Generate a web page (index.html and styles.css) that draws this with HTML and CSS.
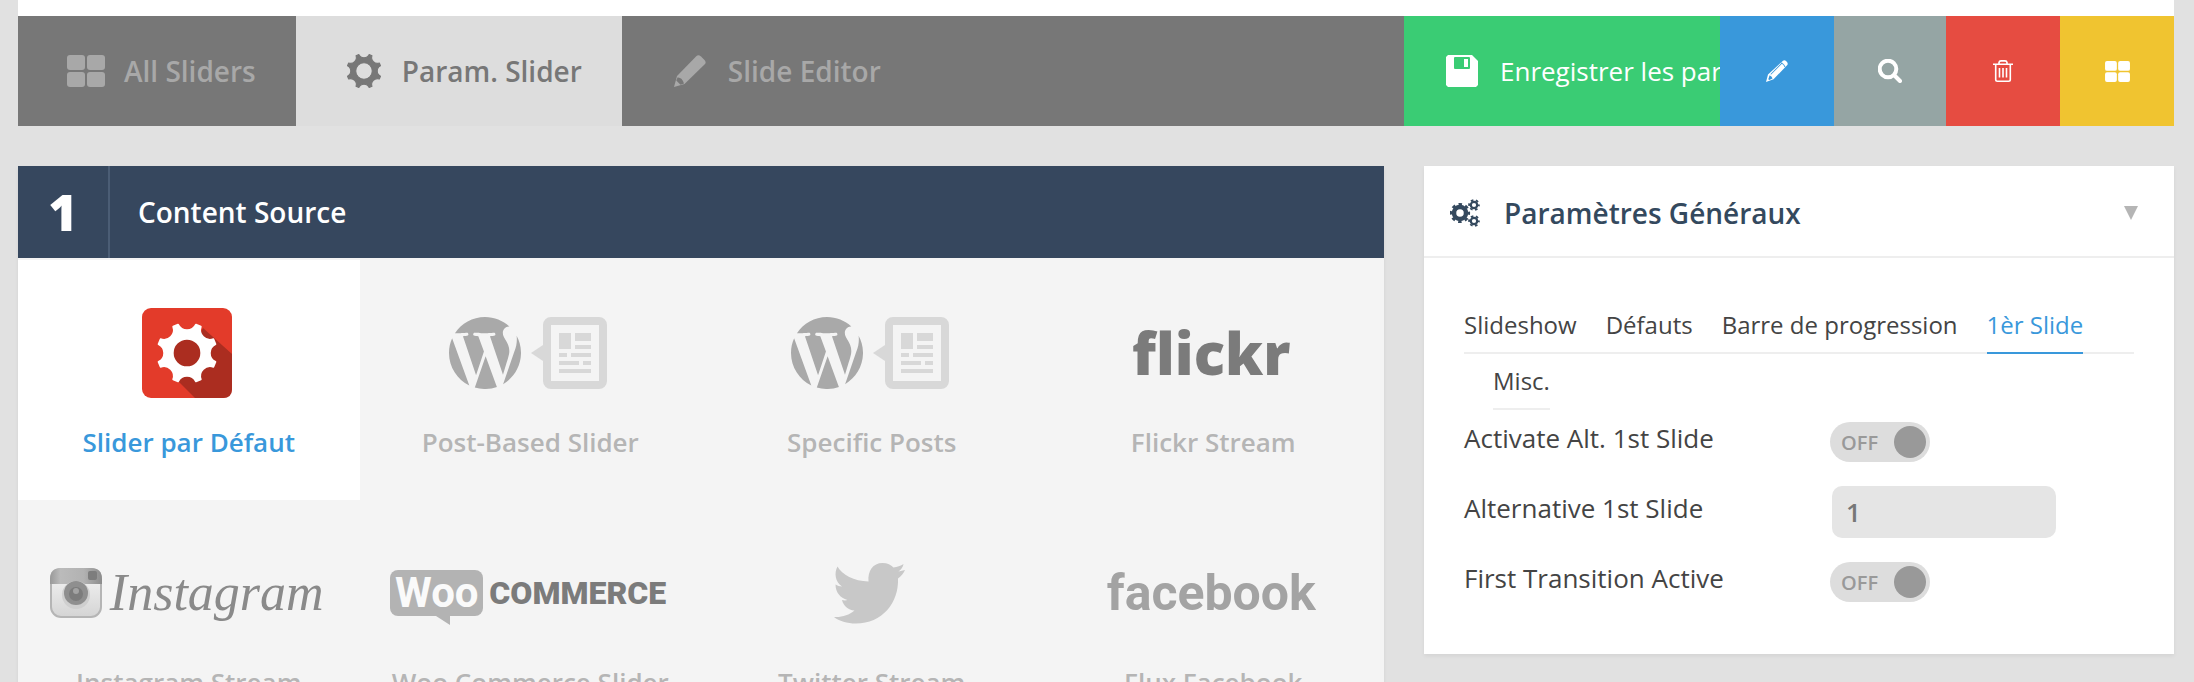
FILE: index.html
```html
<!DOCTYPE html>
<html lang="fr">
<head>
  <meta charset="UTF-8" />
  <meta name="viewport" content="width=device-width, initial-scale=1" />
  <title>Param. Slider</title>
  <link rel="stylesheet" href="styles.css">
</head>
<body>

  <!-- Shared icon shapes -->
  <svg class="sprite" aria-hidden="true">
    <symbol id="gear" viewBox="-50 -50 100 100">
      <path fill-rule="evenodd" stroke="currentColor" stroke-width="3" stroke-linejoin="round" d="M45.8 14.4L42.6 22.2A16 16 0 0 0 22.2 42.6L14.4 45.8A16 16 0 0 0-14.4 45.8L-22.2 42.6A16 16 0 0 0-42.6 22.2L-45.8 14.4A16 16 0 0 0-45.8-14.4L-42.6-22.2A16 16 0 0 0-22.2-42.6L-14.4-45.8A16 16 0 0 0 14.4-45.8L22.2-42.6A16 16 0 0 0 42.6-22.2L45.8-14.4A16 16 0 0 0 45.8 14.4ZM23 0A23 23 0 1 0-23 0A23 23 0 1 0 23 0Z"/>
    </symbol>
    <symbol id="blocks" viewBox="0 0 38 32">
      <rect width="18" height="15" rx="3"/>
      <rect x="20" width="18" height="15" rx="3"/>
      <rect y="17" width="18" height="15" rx="3"/>
      <rect x="20" y="17" width="18" height="15" rx="3"/>
    </symbol>
    <symbol id="wp-post" viewBox="0 0 158 72">
      <svg width="72" height="72" viewBox="8.7 8.7 105.1 105.1" fill="#a9a9a9">
        <path d="m8.708 61.26c0 20.802 12.089 38.779 29.619 47.298l-25.069-68.686c-2.916 6.536-4.55 13.769-4.55 21.388z"/>
        <path d="m96.74 58.608c0-6.495-2.333-10.993-4.334-14.494-2.664-4.329-5.161-7.995-5.161-12.324 0-4.831 3.664-9.328 8.825-9.328.233 0 .454.029.681.042-9.35-8.566-21.807-13.796-35.489-13.796-18.36 0-34.513 9.42-43.91 23.688 1.233.037 2.395.063 3.382.063 5.497 0 14.006-.667 14.006-.667 2.833-.167 3.167 3.994.337 4.329 0 0-2.847.335-6.015.501l19.138 56.925 11.501-34.493-8.188-22.434c-2.83-.166-5.511-.501-5.511-.501-2.832-.166-2.5-4.496.332-4.329 0 0 8.679.667 13.843.667 5.496 0 14.006-.667 14.006-.667 2.835-.167 3.168 3.994.337 4.329 0 0-2.853.335-6.015.501l18.992 56.494 5.242-17.517c2.272-7.269 4.001-12.49 4.001-16.989z"/>
        <path d="m62.184 65.857-15.768 45.819c4.708 1.384 9.687 2.141 14.846 2.141 6.12 0 11.989-1.058 17.452-2.979-.141-.225-.269-.464-.374-.724z"/>
        <path d="m107.376 36.046c.226 1.674.354 3.471.354 5.404 0 5.333-.996 11.328-3.996 18.824l-16.053 46.413c15.624-9.111 26.133-26.038 26.133-45.426.001-9.137-2.333-17.729-6.438-25.215z"/>
      </svg>
      <g fill="#d8d8d8">
        <path d="M82 36l12-8v16z"/>
        <path fill-rule="evenodd" d="M102 0h48a8 8 0 0 1 8 8v56a8 8 0 0 1-8 8h-48a8 8 0 0 1-8-8V8a8 8 0 0 1 8-8zM102 8v56h48V8z"/>
        <path d="M110 16h12v16h-12zM126 16h16v8h-16zM126 28h16v4h-16zM110 36h8v4h-8zM122 36h20v4h-20zM110 44h20v4h-20zM134 44h8v4h-8zM110 52h32v4h-32z"/>
      </g>
    </symbol>
  </svg>

  <div class="wrapper">

    <nav class="toolbar">
      <a href="#sliders" class="tab">
        <svg class="tab-icon" width="40" height="32"><use href="#blocks"/></svg>
        All Sliders
      </a>
      <a href="#params" class="tab active">
        <svg class="tab-icon" width="40" height="36"><use href="#gear"/></svg>
        Param. Slider
      </a>
      <a href="#editor" class="tab">
        <svg class="tab-icon" width="40" height="32" viewBox="0 0 40 32">
          <path d="M26.500 1Q28.500-.5 31 1.500L34.500 5Q36.500 7.500 35 9L14.500 29L4 32L7 21Z"/>
          <path class="notch" d="M7.500 22.500Q12 22 14 28.500L10.500 29.800L6.300 25.500Z"/>
        </svg>
        Slide Editor
      </a>

      <div class="actions">
        <button class="action save">
          <svg width="32" height="32" viewBox="0 0 32 32">
            <path fill="#fff" d="M2 0H26L32 6V30L30 32H2L0 30V2Z"/>
            <path fill="#3acc74" fill-rule="evenodd" d="M9 2H23Q24 2 24 3V13Q24 14 23 14H9Q8 14 8 13V3Q8 2 9 2ZM18 4V12H22V4Z"/>
          </svg>
          Enregistrer les paramètres
        </button>
        <button class="action edit" aria-label="Modifier">
          <svg width="22" height="22" viewBox="0 0 22 22">
            <path fill="#fff" fill-rule="evenodd" d="M17 .8Q18.500-.4 20.300 1.200Q22.500 3.200 21.300 5L7.500 19.300L0 22L2 14.500ZM3.600 15.300L2.300 19.200L3.300 19.900L6.500 18.600Q6.300 16.400 3.600 15.300ZM5.200 14.600L16.600 3L15.900 2.600L4.300 14.300Z"/>
            <path stroke="#3998db" stroke-width="1" fill="none" d="M15 3Q18 3.500 19 7"/>
          </svg>
        </button>
        <button class="action preview" aria-label="Aperçu">
          <svg width="24" height="24" viewBox="0 0 24 24" fill="none" stroke="#fff" stroke-width="4">
            <circle cx="10" cy="10" r="8.300"/>
            <path d="M16.500 16.500L22 22" stroke-linecap="round"/>
          </svg>
        </button>
        <button class="action delete" aria-label="Supprimer">
          <svg width="20" height="22" viewBox="0 0 20 22" fill="none" stroke="#fff" stroke-width="1.600">
            <path d="M0 4.300H20M6 4V2.500Q6.300.9 8 .9H12Q13.700.9 14 2.500V4M2.700 4.500V19.500Q2.700 21.200 4.400 21.200H15.600Q17.300 21.200 17.300 19.500V4.500M6.500 8V17.500M10 8V17.500M13.500 8V17.500"/>
          </svg>
        </button>
        <button class="action all" aria-label="Tous les sliders">
          <svg width="25" height="21" fill="#fff"><use href="#blocks"/></svg>
        </button>
      </div>
    </nav>

    <div class="columns">

      <section class="source">
        <header class="source-header">
          <span class="step">1</span>
          <h2>Content Source</h2>
        </header>

        <div class="source-grid">
          <label class="tile selected">
            <input type="radio" name="source" checked>
            <span class="logo">
              <svg width="90" height="90" viewBox="0 0 90 90">
                <rect width="90" height="90" rx="9" fill="#e33b2a"/>
                <path fill="#ab2d20" d="M61 20L90 46V81Q90 90 81 90H53L36 73Z"/>
                <circle cx="45" cy="45" r="16" fill="#ab2d20"/>
                <svg x="14" y="14" width="62" height="62" class="white"><use href="#gear"/></svg>
              </svg>
            </span>
            Slider par Défaut
          </label>

          <label class="tile">
            <input type="radio" name="source">
            <span class="logo"><svg width="158" height="72"><use href="#wp-post"/></svg></span>
            Post-Based Slider
          </label>

          <label class="tile">
            <input type="radio" name="source">
            <span class="logo"><svg width="158" height="72"><use href="#wp-post"/></svg></span>
            Specific Posts
          </label>

          <label class="tile">
            <input type="radio" name="source">
            <span class="logo flickr">flickr</span>
            Flickr Stream
          </label>

          <label class="tile">
            <input type="radio" name="source">
            <span class="logo instagram">
              <svg width="52" height="50" viewBox="0 0 52 50">
                <defs>
                  <linearGradient id="body" x2="0" y2="1"><stop stop-color="#f6f6f6"/><stop offset="1" stop-color="#d4d4d4"/></linearGradient>
                  <linearGradient id="leather"><stop stop-color="#999"/><stop offset=".2" stop-color="#bbb"/><stop offset=".65" stop-color="#b2b2b2"/><stop offset="1" stop-color="#8c8c8c"/></linearGradient>
                </defs>
                <rect x="1" y="1" width="50" height="48" rx="10" fill="url(#body)" stroke="#b5b5b5" stroke-width="2"/>
                <path fill="url(#leather)" d="M0 16V11Q0 0 11 0H41Q52 0 52 11V16Z"/>
                <rect x="38" y="3" width="9" height="9" rx="2" fill="#7d7d7d"/>
                <circle cx="26" cy="27" r="14" fill="#cfcfcf"/>
                <circle cx="26" cy="25" r="12" fill="#8f8f8f"/>
                <circle cx="26" cy="26" r="7" fill="#7c7c7c"/>
                <circle cx="26" cy="23" r="3" fill="#a3a3a3"/>
              </svg>
              Instagram
            </span>
            Instagram Stream
          </label>

          <label class="tile">
            <input type="radio" name="source">
            <span class="logo woo"><b>Woo</b>COMMERCE</span>
            Woo Commerce Slider
          </label>

          <label class="tile">
            <input type="radio" name="source">
            <span class="logo">
              <svg width="71" height="61" viewBox="0 0 71 61" fill="#c8c8c8">
                <path d="M3.500 3.500C8 12 20 18 34.500 18.500C33.500 8 39 0 48.500 0C53.500 0 57 2 59.500 4.500C63 4 67 3 69.500 1C69 4 67 7 64.500 8.500C67 8 69 7.500 71 7C69.500 10.500 67 13.500 64 15.500C65 40 48 60.500 22 60.500C13 60.500 5 58 0 54C8 54.500 15 52 20.500 47.500C14 47 9.500 43 8 37C10 37.500 12 37.500 13.500 37C6 35 1.500 29 1.500 21.500C3.500 22.500 5.500 23.500 8 23.500C1 18.500 0 10 3.500 3.500Z"/>
              </svg>
            </span>
            Twitter Stream
          </label>

          <label class="tile">
            <input type="radio" name="source">
            <span class="logo facebook">facebook</span>
            Flux Facebook
          </label>
        </div>
      </section>

      <aside class="panel">
        <header class="panel-header">
          <svg width="30" height="28" viewBox="0 0 30 28" fill="none" stroke="currentColor">
            <circle cx="10" cy="14" r="6" stroke-width="4.500"/>
            <circle cx="10" cy="14" r="8.800" stroke-width="2.600" stroke-dasharray="3.455" stroke-dashoffset="1.700"/>
            <circle cx="24" cy="6" r="3.200" stroke-width="2.200"/>
            <circle cx="24" cy="6" r="4.900" stroke-width="1.800" stroke-dasharray="2.566" stroke-dashoffset="1.283"/>
            <circle cx="24" cy="22" r="3.200" stroke-width="2.200"/>
            <circle cx="24" cy="22" r="4.900" stroke-width="1.800" stroke-dasharray="2.566" stroke-dashoffset="1.283"/>
          </svg>
          <h3>Paramètres Généraux</h3>
          <button class="collapse" aria-label="Replier">
            <svg width="14" height="14" viewBox="0 0 14 14" fill="#b5b5b5"><path d="M0 0H14L7 14Z"/></svg>
          </button>
        </header>

        <div class="panel-body">
          <ul class="subtabs">
            <li><a href="#slideshow">Slideshow</a></li>
            <li><a href="#defauts">Défauts</a></li>
            <li><a href="#progression">Barre de progression</a></li>
            <li><a href="#first" class="current">1èr Slide</a></li>
            <li><a href="#misc">Misc.</a></li>
          </ul>

          <div class="settings">
            <label for="alt-active">Activate Alt. 1st Slide</label>
            <span class="switch">
              <input type="checkbox" id="alt-active">
              <span>OFF</span>
            </span>

            <label for="alt-slide">Alternative 1st Slide</label>
            <input type="text" id="alt-slide" class="field" value="1">

            <label for="transition">First Transition Active</label>
            <span class="switch">
              <input type="checkbox" id="transition">
              <span>OFF</span>
            </span>
          </div>
        </div>
      </aside>

    </div>
  </div>

</body>
</html>
```

FILE: styles.css
```css
* {
  box-sizing: border-box;
  margin: 0;
  padding: 0;
}

body {
  font-family: 'Open Sans', 'Noto Sans', sans-serif;
  background-color: #e1e1e1;
  color: #444;
  font-size: 26px;
}

button,
input {
  font: inherit;
  border: none;
}

button {
  cursor: pointer;
}

a {
  color: inherit;
  text-decoration: none;
}

svg {
  display: block;
  flex-shrink: 0;
}

.sprite {
  position: absolute;
  width: 0;
  height: 0;
}

.wrapper {
  margin: 0 20px 0 18px;
  border-top: 16px solid #fff;
}

/* Toolbar */
.toolbar {
  display: flex;
  height: 110px;
  background-color: #777;
}

.tab {
  display: flex;
  align-items: center;
  gap: 18px;
  padding: 0 40px 0 48px;
  color: #a8a8a8;
  font-size: 28px;
  font-weight: 600;
  white-space: nowrap;
}

.tab.active {
  background-color: #ddd;
  color: #777;
}

.tab-icon {
  fill: currentColor;
}

.notch {
  fill: #777;
}

.actions {
  display: flex;
  margin-left: auto;
}

.action {
  display: flex;
  align-items: center;
  justify-content: center;
  width: 114px;
  color: #fff;
}

.action.save {
  justify-content: flex-start;
  gap: 22px;
  width: 316px;
  padding-left: 42px;
  overflow: hidden;
  white-space: nowrap;
  background-color: #3acc74;
}

.action.edit {
  background-color: #3998db;
}

.action.preview {
  width: 112px;
  background-color: #95a5a4;
}

.action.delete {
  background-color: #e64c41;
}

.action.all {
  background-color: #f0c430;
}

/* Columns */
.columns {
  display: flex;
  align-items: flex-start;
  gap: 40px;
  margin-top: 40px;
}

.source {
  flex: 1;
  background-color: #f4f4f4;
  box-shadow: 0 2px 4px rgba(0, 0, 0, 0.06);
}

.source-header {
  display: flex;
  align-items: center;
  height: 92px;
  background-color: #36475e;
  color: #fff;
}

.step {
  width: 92px;
  border-right: 2px solid #4b5d75;
  font-size: 50px;
  font-weight: 800;
  line-height: 92px;
  text-align: center;
}

h2,
h3 {
  font-size: 28px;
  font-weight: 600;
}

h2 {
  padding-left: 28px;
}

.source-grid {
  display: grid;
  grid-template-columns: repeat(4, 1fr);
  padding-top: 2px;
}

.tile {
  display: flex;
  flex-direction: column;
  align-items: center;
  gap: 26px;
  height: 240px;
  padding-top: 48px;
  color: #b5b5b5;
  font-weight: 600;
  cursor: pointer;
}

.tile input {
  position: absolute;
  opacity: 0;
}

.tile.selected {
  background-color: #fff;
  color: #3998db;
}

.white {
  color: #fff;
  fill: currentColor;
}

.logo {
  display: flex;
  align-items: center;
  height: 90px;
  padding-right: 4px;
  line-height: 90px;
}

.flickr {
  color: #7b7b7b;
  font-size: 58px;
  font-weight: 800;
  font-variant-ligatures: none;
}

.instagram {
  gap: 8px;
  color: #8a8a8a;
  font-family: 'Liberation Serif', serif;
  font-size: 52px;
  font-style: italic;
  font-weight: 400;
}

.woo {
  gap: 6px;
  color: #7b7b7b;
  font-family: 'Roboto', sans-serif;
  font-size: 32px;
  font-weight: 900;
}

.woo b {
  position: relative;
  width: 93px;
  border-radius: 8px;
  background-color: #b3b3b3;
  color: #fafafa;
  font-size: 42px;
  font-weight: 700;
  line-height: 46px;
  text-align: center;
}

/* Speech bubble tail */
.woo b::after {
  content: '';
  position: absolute;
  top: 46px;
  left: 46px;
  border-top: 9px solid #b3b3b3;
  border-left: 14px solid transparent;
}

.facebook {
  color: #a3a3a3;
  font-family: 'Roboto', sans-serif;
  font-size: 50px;
  font-weight: 700;
}

/* Settings panel */
.panel {
  width: 750px;
  background-color: #fff;
  box-shadow: 0 2px 4px rgba(0, 0, 0, 0.06);
}

.panel-header {
  display: flex;
  align-items: center;
  gap: 24px;
  height: 92px;
  padding: 4px 36px 0 26px;
  border-bottom: 2px solid #eee;
  color: #34495e;
}

.collapse {
  margin-left: auto;
  background: none;
}

.panel-body {
  padding: 40px 40px 52px;
}

.subtabs {
  display: flex;
  flex-wrap: wrap;
  list-style: none;
  font-size: 24px;
  /* full-width rule under the first line of tabs */
  background: linear-gradient(#eee, #eee) 0 54px / 100% 2px no-repeat;
}

.subtabs li + li {
  margin-left: 29px;
}

.subtabs a {
  display: block;
  height: 56px;
  line-height: 54px;
  border-bottom: 2px solid #eee;
}

.subtabs .current {
  color: #3998db;
  border-color: #3998db;
}

.settings {
  display: grid;
  grid-template-columns: 366px 1fr;
  gap: 24px 0;
  align-items: center;
  padding-top: 12px;
}

.settings label {
  line-height: 32px;
  padding-bottom: 8px;
}

.switch {
  display: flex;
  align-items: center;
  justify-content: space-between;
  flex-direction: row-reverse;
  width: 100px;
  height: 40px;
  padding: 0 4px 0 11px;
  border-radius: 20px;
  background-color: #ddd;
  color: #999;
  font-size: 20px;
  font-weight: 600;
}

.switch input {
  appearance: none;
  width: 32px;
  height: 32px;
  border-radius: 50%;
  background-color: #999;
  cursor: pointer;
}

.field {
  width: 224px;
  height: 52px;
  margin-left: 2px;
  padding: 0 14px;
  border-radius: 10px;
  background-color: #e5e5e5;
  color: #777;
  font-weight: 600;
}
```
